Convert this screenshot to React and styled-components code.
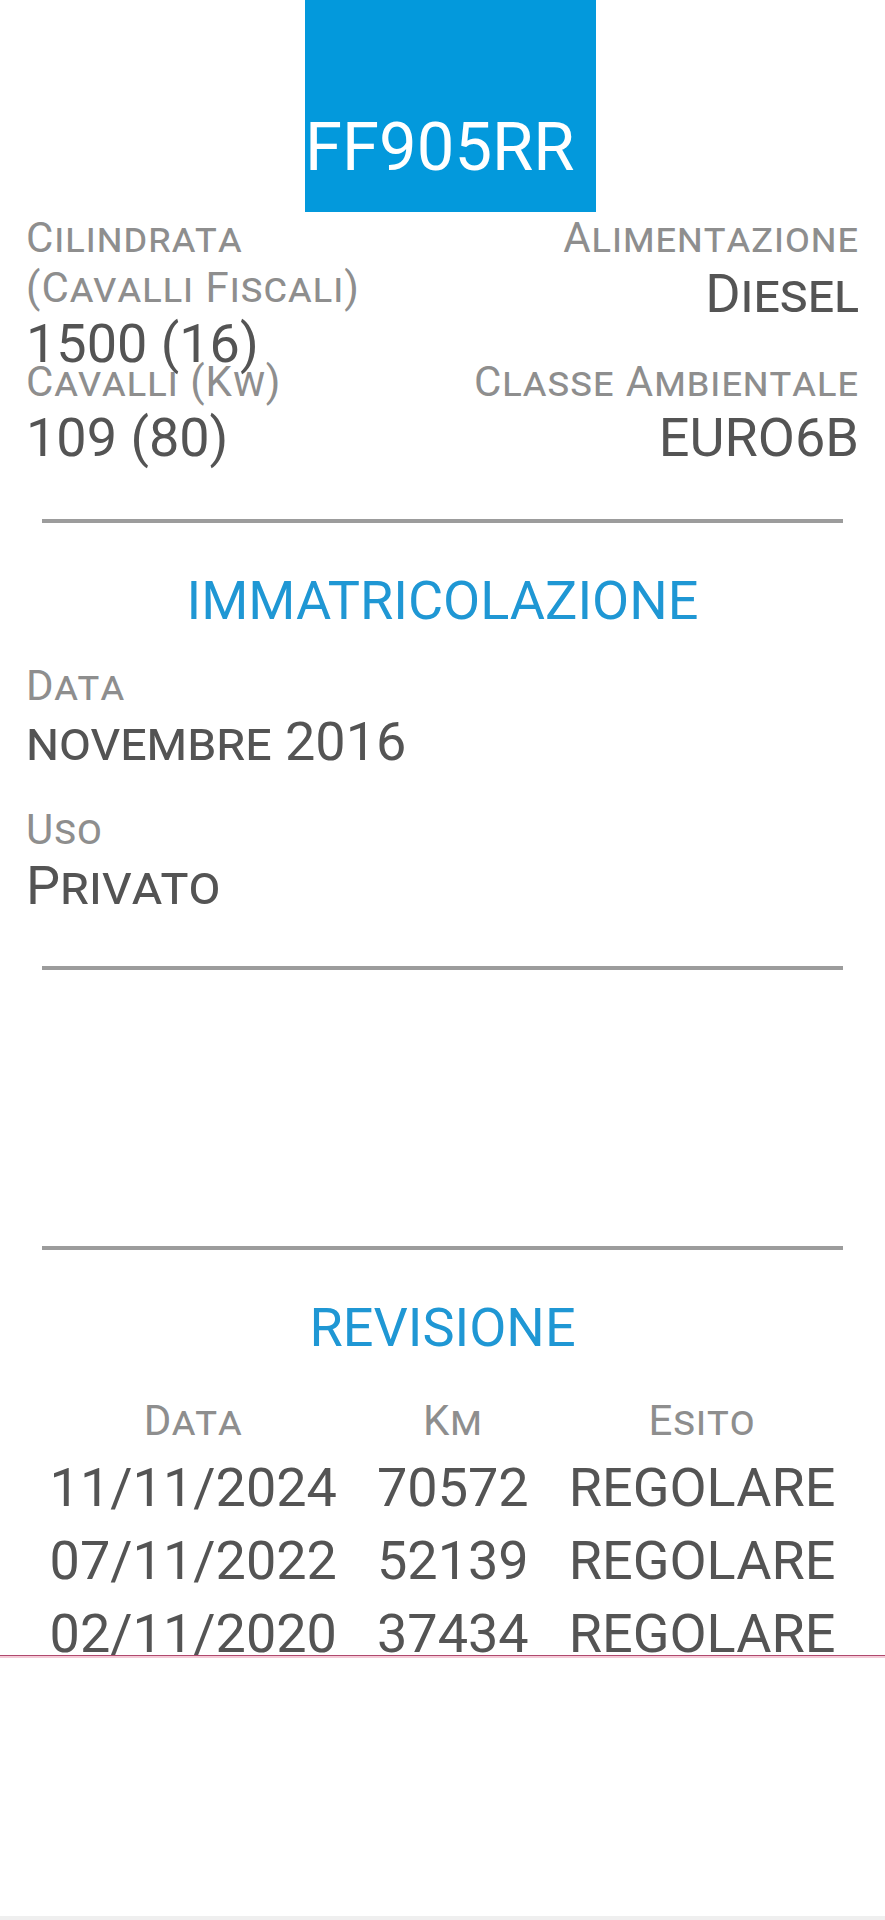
import React from 'react'
import styled, { createGlobalStyle } from 'styled-components'

const GlobalStyle = createGlobalStyle`
  html, body {
    margin: 0;
    padding: 0;
    background: #fff;
  }
  body {
    font-family: Roboto, "Noto Sans", "Liberation Sans", sans-serif;
  }
`

const Screen = styled.div`
  width: 885px;
  height: 1920px;
  display: flex;
  flex-direction: column;
  overflow: hidden;
`

// the scrolling card, cut off at the bottom
const Scroller = styled.div`
  height: 1655px;
  overflow: hidden;
  border-bottom: 1px solid #b04a6e;
  box-shadow: 0 2px 0 #f4cbd8;
  flex-shrink: 0;
`

const BottomPanel = styled.div`
  flex: 1;
  display: flex;
  flex-direction: column;
  justify-content: flex-end;
`

const NavStrip = styled.div`
  height: 4px;
  background: #efefef;
`

const PlateRow = styled.div`
  display: flex;
  justify-content: center;
  padding-left: 16px;
`

const Plate = styled.div`
  width: 291px;
  height: 212px;
  box-sizing: border-box;
  background: #0399dc;
  color: #fff;
  display: flex;
  align-items: flex-end;
  padding-bottom: 31px;
  font-size: 67px;
  line-height: 67px;
  white-space: nowrap;
`

const Specs = styled.div`
  display: grid;
  grid-template-columns: 380px 1fr;
  padding: 1px 26px 0;
`

const Field = styled.div`
  height: 144px;
  text-align: ${(p) => (p.$right ? 'right' : 'left')};
`

const Label = styled.div`
  color: #8e8e8e;
  font-size: 42px;
  line-height: 50px;
  letter-spacing: 1px;
  font-variant: small-caps;
`

const Value = styled.div`
  color: #545454;
  font-size: 54px;
  line-height: 61px;
  font-variant: small-caps;
  white-space: nowrap;
`

const Divider = styled.hr`
  border: 0;
  height: 4px;
  background: #9c9c9c;
  margin: ${(p) => p.$top || 0}px 42px 0;
`

const Section = styled.section`
  padding: 0 26px;
`

const Title = styled.h2`
  margin: 47px 0 0;
  text-align: center;
  font-weight: 400;
  font-size: 54px;
  line-height: 62px;
  color: #1f97d4;
`

const Fields = styled.div`
  margin-top: 29px;
`

const Blank = styled.div`
  height: 276px;
`

const Table = styled.table`
  margin: 37px auto 0;
  border-collapse: collapse;
`

const Th = styled.th`
  padding: 0 20px 5px;
  font-weight: 400;
  font-size: 42px;
  line-height: 50px;
  letter-spacing: 1px;
  color: #8e8e8e;
  font-variant: small-caps;
  text-align: center;
`

const Td = styled.td`
  padding: 0 20px;
  font-size: 54px;
  line-height: 73px;
  color: #545454;
  text-align: center;
  white-space: nowrap;
`

const specs = [
  { label: 'Cilindrata (Cavalli Fiscali)', value: '1500 (16)' },
  { label: 'Alimentazione', value: 'Diesel', right: true },
  { label: 'Cavalli (Kw)', value: '109 (80)' },
  { label: 'Classe Ambientale', value: 'EURO6B', right: true },
]

const revisioni = [
  ['11/11/2024', '70572', 'REGOLARE'],
  ['07/11/2022', '52139', 'REGOLARE'],
  ['02/11/2020', '37434', 'REGOLARE'],
]

export default function App() {
  return (
    <Screen>
      <GlobalStyle />
      <Scroller>
        <PlateRow>
          <Plate>FF905RR</Plate>
        </PlateRow>

        <Specs>
          {specs.map((s) => (
            <Field key={s.label} $right={s.right}>
              <Label>{s.label}</Label>
              <Value>{s.value}</Value>
            </Field>
          ))}
        </Specs>

        <Divider $top={18} />

        <Section>
          <Title>IMMATRICOLAZIONE</Title>
          <Fields>
            <Field>
              <Label>Data</Label>
              <Value>novembre 2016</Value>
            </Field>
            <Field>
              <Label>Uso</Label>
              <Value>Privato</Value>
            </Field>
          </Fields>
        </Section>

        <Divider $top={17} />
        <Blank />
        <Divider />

        <Section>
          <Title>REVISIONE</Title>
          <Table>
            <thead>
              <tr>
                <Th>Data</Th>
                <Th>Km</Th>
                <Th>Esito</Th>
              </tr>
            </thead>
            <tbody>
              {revisioni.map((r) => (
                <tr key={r[0]}>
                  {r.map((c, i) => (
                    <Td key={i}>{c}</Td>
                  ))}
                </tr>
              ))}
            </tbody>
          </Table>
        </Section>
      </Scroller>
      <BottomPanel>
        <NavStrip />
      </BottomPanel>
    </Screen>
  )
}
